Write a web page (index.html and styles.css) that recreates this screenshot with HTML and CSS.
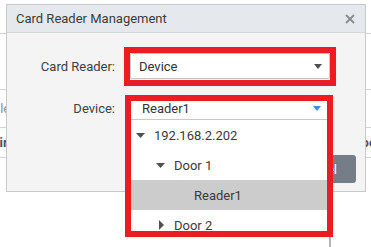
FILE: index.html
```html
<!DOCTYPE html>
<html>
<head>
<meta charset="utf-8">
<link rel="stylesheet" href="styles.css">
</head>
<body>
<div class="page">
  <div class="bg-row bg-r1"></div>
  <div class="bg-row bg-r2"></div>
  <div class="bg-row bg-r3"><span class="cell-l cell-title">Title</span></div>
  <div class="bg-row bg-r4"><span class="cell-l cell-dir strong">Direction</span><span class="cell-r strong">Door</span></div>
</div>

<div class="dialog">
  <div class="dlg-head">
    <span class="dlg-title">Card Reader Management</span>
    <svg class="dlg-close" width="10" height="10" viewBox="0 0 10 10"><path d="M1 1L9 9M9 1L1 9" stroke="#8a8a8a" stroke-width="1.8" fill="none"/></svg>
  </div>
  <div class="dlg-body">
    <div class="form-row row-reader">
      <label class="lbl">Card Reader:</label>
      <div class="select sel-reader">
        <span class="sel-text">Device</span>
        <svg class="caret" width="8" height="5" viewBox="0 0 8 5"><path d="M0 0H8L4 5Z" fill="#505050"/></svg>
      </div>
    </div>
    <div class="form-row row-device">
      <label class="lbl">Device:</label>
      <div class="select sel-device">
        <span class="sel-text">Reader1</span>
        <svg class="caret" width="8" height="5" viewBox="0 0 8 5"><path d="M0 0H8L4 5Z" fill="#3c8ee6"/></svg>
      </div>
    </div>
    <div class="dlg-foot">
      <button class="btn">OK</button>
      <button class="btn">Cancel</button>
    </div>
  </div>
</div>

<ul class="tree">
  <li class="node lv0"><span class="tog"><svg width="9" height="5" viewBox="0 0 9 5"><path d="M0 0H9L4.5 5Z" fill="#505050"/></svg></span>192.168.2.202</li>
  <li class="node lv1"><span class="tog"><svg width="9" height="5" viewBox="0 0 9 5"><path d="M0 0H9L4.5 5Z" fill="#505050"/></svg></span>Door 1</li>
  <li class="node lv2 selected"><span class="tog"></span>Reader1</li>
  <li class="node lv1"><span class="tog tog-r"><svg width="5" height="10" viewBox="0 0 5 10"><path d="M0 0V10L5 5Z" fill="#505050"/></svg></span>Door 2</li>
  <li class="node lv2"><span class="tog"></span>Reader2</li>
</ul>

<div class="mark mark-reader"></div>
<div class="mark mark-device"></div>
</body>
</html>
```

FILE: styles.css
```css
* { box-sizing: border-box; }
html, body {
  margin: 0;
  padding: 0;
  width: 371px;
  height: 247px;
  overflow: hidden;
  background: #ffffff;
  font-family: Roboto, "Noto Sans", sans-serif;
  color: #333;
}
.page {
  display: flex;
  flex-direction: column;
}
.bg-row {
  display: flex;
  align-items: center;
  border-bottom: 1px solid #d2d2d2;
  font-size: 13px;
  color: #8f8f8f;
  white-space: nowrap;
}
.bg-r1 { height: 34px; }
.bg-r2 { height: 56px; }
.bg-r3 { height: 38px; }
.bg-r4 { height: 30px; }
.cell-title { margin-left: -15px; }
.cell-dir { margin-left: -9px; }
.cell-r { margin-left: auto; margin-right: -10px; }
.strong { color: #44506a; font-weight: 700; }

.dialog {
  position: absolute;
  left: 6px;
  top: 4px;
  width: 360px;
  height: 188px;
  border: 1px solid #c9c9c9;
  background: #f4f4f4;
  display: flex;
  flex-direction: column;
}
.dlg-head {
  height: 28px;
  flex: none;
  background: #e5e8ec;
  border-bottom: 1px solid #d3d6da;
  display: flex;
  align-items: center;
  padding: 0 10px 0 9px;
}
.dlg-title {
  font-size: 13px;
  color: #3d3d3d;
}
.dlg-close { margin-left: auto; }
.dlg-body {
  flex: 1;
  display: flex;
  flex-direction: column;
  padding-top: 20px;
}
.form-row {
  display: flex;
  align-items: center;
}
.row-device { margin-top: 17px; }
.lbl {
  width: 108px;
  text-align: right;
  margin-right: 15px;
  font-size: 13px;
  color: #404040;
}
.select {
  width: 200px;
  background: #fff;
  border: 1px solid #c8c8c8;
  border-radius: 2px;
  display: flex;
  align-items: center;
  font-size: 13px;
  color: #333;
}
.sel-reader { height: 26px; padding: 0 7px 0 8px; }
.sel-device { height: 24px; padding: 0 8px 0 11px; border-radius: 0; }
.caret { margin-left: auto; }
.dlg-foot {
  margin-top: auto;
  display: flex;
  justify-content: flex-end;
  gap: 8px;
  padding: 0 9px 8px 0;
}
.btn {
  width: 80px;
  height: 28px;
  border: none;
  border-radius: 3px;
  background: #757d88;
  color: #fff;
  font-family: inherit;
  font-size: 13px;
  text-align: right;
  padding: 0 19px 0 0;
}

.tree {
  position: absolute;
  left: 130px;
  top: 120px;
  width: 201px;
  height: 140px;
  margin: 0;
  padding: 0;
  list-style: none;
  background: #fff;
  border-right: 2px solid #b4b4b4;
  overflow: hidden;
  font-size: 13px;
  color: #3a3a3a;
}
.node {
  height: 30px;
  display: flex;
  align-items: center;
  padding-left: 6px;
}
.node.lv1 { padding-left: 26px; }
.node.lv2 { padding-left: 46px; }
.node.selected { background: #cccccc; }
.tog {
  width: 18px;
  flex: none;
  display: flex;
  align-items: center;
}
.tog svg { display: block; }
.tog-r { padding-left: 3px; }

.mark {
  position: absolute;
  border: 6px solid #ed1c24;
  pointer-events: none;
}
.mark-reader { left: 124px; top: 47px; width: 212px; height: 39px; }
.mark-device { left: 125px; top: 95px; width: 208px; height: 142px; }
```
